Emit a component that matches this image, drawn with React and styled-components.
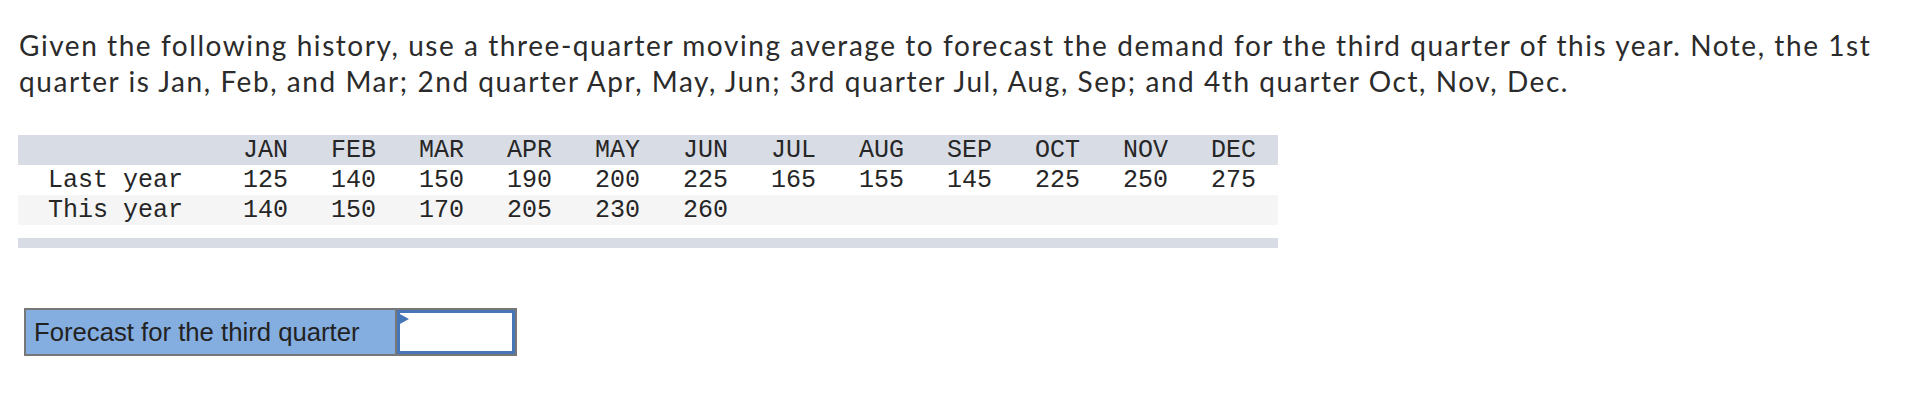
import React from "react";
import styled, { createGlobalStyle } from "styled-components";

const GlobalStyle = createGlobalStyle`
  html, body {
    margin: 0;
    padding: 0;
    background: #ffffff;
  }
`;

const Page = styled.div`
  display: flex;
  flex-direction: column;
  align-items: flex-start;
  width: 1910px;
  height: 408px;
  overflow: hidden;
`;

const Prompt = styled.p`
  margin: 27px 0 0 19px;
  font-family: Lato, "Open Sans", sans-serif;
  font-size: 28px;
  line-height: 36px;
  letter-spacing: 1.56px;
  color: #2b2b2b;
  white-space: nowrap;
`;

const Table = styled.div`
  display: flex;
  flex-direction: column;
  width: 1260px;
  margin: 36px 0 0 18px;
  font-family: "Liberation Mono", "Courier New", monospace;
  font-size: 25px;
  color: #262626;
`;

const Row = styled.div`
  display: grid;
  grid-template-columns: 225px repeat(11, 88px) 1fr;
  height: ${props => props.h || "30px"};
  align-items: center;
  background: ${props => props.bg || "transparent"};
  margin-top: ${props => props.top || "0"};
`;

const Cell = styled.span`
  padding-left: ${props => (props.first ? "30px" : "0")};
  white-space: pre;
`;

const Forecast = styled.div`
  display: flex;
  margin: 60px 0 0 24px;
  border: 2px solid #777777;
  height: 44px;
`;

const Label = styled.div`
  display: flex;
  align-items: center;
  width: 361px;
  padding-left: 8px;
  background: #84ade0;
  border-right: 2px solid #777777;
  font-family: "Liberation Sans", Arial, sans-serif;
  font-size: 25.7px;
  color: #222222;
`;

const Answer = styled.div`
  position: relative;
  width: 112px;
  border: 3px solid #4676b8;
  background: #ffffff;
`;

const Flag = styled.span`
  position: absolute;
  left: -2px;
  top: 0;
  width: 0;
  height: 0;
  border-top: 6px solid transparent;
  border-bottom: 6px solid transparent;
  border-left: 11px solid #4676b8;
`;

const months = ["JAN", "FEB", "MAR", "APR", "MAY", "JUN", "JUL", "AUG", "SEP", "OCT", "NOV", "DEC"];
const lastYear = [125, 140, 150, 190, 200, 225, 165, 155, 145, 225, 250, 275];
const thisYear = [140, 150, 170, 205, 230, 260];

export default function App() {
  return (
    <>
      <GlobalStyle />
      <Page>
        <Prompt>
          Given the following history, use a three-quarter moving average to forecast the demand for the third quarter of this year. Note, the 1st
          <br />
          quarter is Jan, Feb, and Mar; 2nd quarter Apr, May, Jun; 3rd quarter Jul, Aug, Sep; and 4th quarter Oct, Nov, Dec.
        </Prompt>
        <Table>
          <Row bg="#d8dce5">
            <Cell first />
            {months.map(m => (
              <Cell key={m}>{m}</Cell>
            ))}
          </Row>
          <Row>
            <Cell first>Last year</Cell>
            {lastYear.map((v, i) => (
              <Cell key={i}>{v}</Cell>
            ))}
          </Row>
          <Row bg="#f5f5f5">
            <Cell first>This year</Cell>
            {months.map((m, i) => (
              <Cell key={m}>{thisYear[i] || ""}</Cell>
            ))}
          </Row>
          <Row bg="#d8dce5" h="10px" top="13px" />
        </Table>
        <Forecast>
          <Label>Forecast for the third quarter</Label>
          <Answer>
            <Flag />
          </Answer>
        </Forecast>
      </Page>
    </>
  );
}
